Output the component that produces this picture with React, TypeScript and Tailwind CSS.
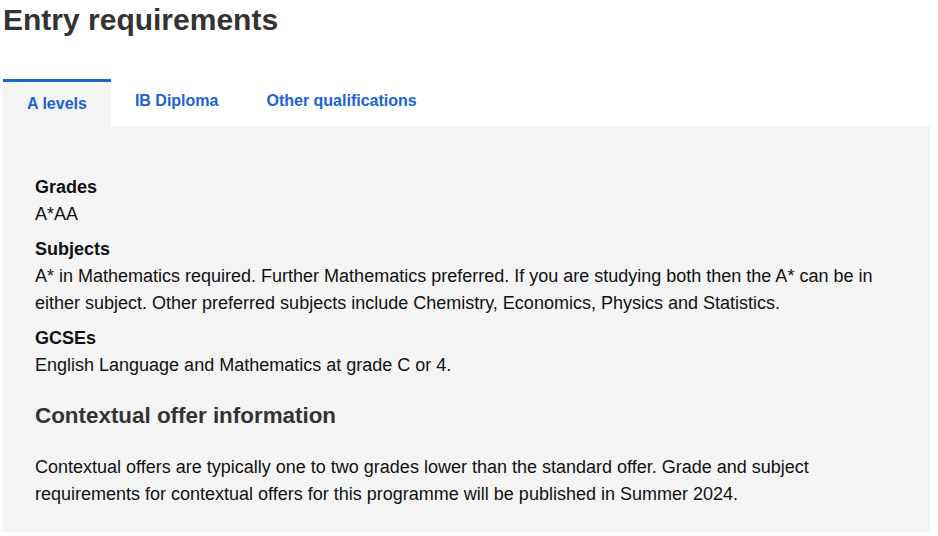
import React from "react";

export default function App() {
  const font = { fontFamily: '"Liberation Sans", Arial, sans-serif' };
  return (
    <div className="w-[938px] h-[536px] bg-white pl-[3px] pr-[8px]" style={font}>
      <h1 className="pt-[2px] text-[30px] leading-[36px] font-bold text-[#333333] m-0">Entry requirements</h1>
      <div className="mt-[41px] flex items-end">
        <div className="border-t-[3px] border-[#1767d1] bg-[#f4f4f4] px-6 pt-[10px] pb-[10px] text-[16px] leading-[24px] font-bold text-[#1a62d6]">
          A levels
        </div>
        <div className="px-6 pt-[10px] pb-[13px] text-[16px] leading-[24px] font-bold text-[#1a62d6]">IB Diploma</div>
        <div className="px-6 pt-[10px] pb-[13px] text-[16px] leading-[24px] font-bold text-[#1a62d6]">Other qualifications</div>
      </div>
      <div className="bg-[#f4f4f4] h-[406px] px-8 pt-[48px] text-[18px] leading-[27px] text-[#111111]">
        <div className="font-bold">Grades</div>
        <div>A*AA</div>
        <div className="font-bold mt-[8px]">Subjects</div>
        <div>
          A* in Mathematics required. Further Mathematics preferred. If you are studying both then the A* can be in either subject. Other preferred subjects include Chemistry, Economics, Physics and Statistics.
        </div>
        <div className="font-bold mt-[8px]">GCSEs</div>
        <div>English Language and Mathematics at grade C or 4.</div>
        <h2 className="mt-[24px] text-[22.4px] leading-[26px] font-bold text-[#333333]">Contextual offer information</h2>
        <p className="mt-[25px]">
          Contextual offers are typically one to two grades lower than the standard offer. Grade and subject requirements for contextual offers for this programme will be published in Summer 2024.
        </p>
      </div>
    </div>
  );
}
